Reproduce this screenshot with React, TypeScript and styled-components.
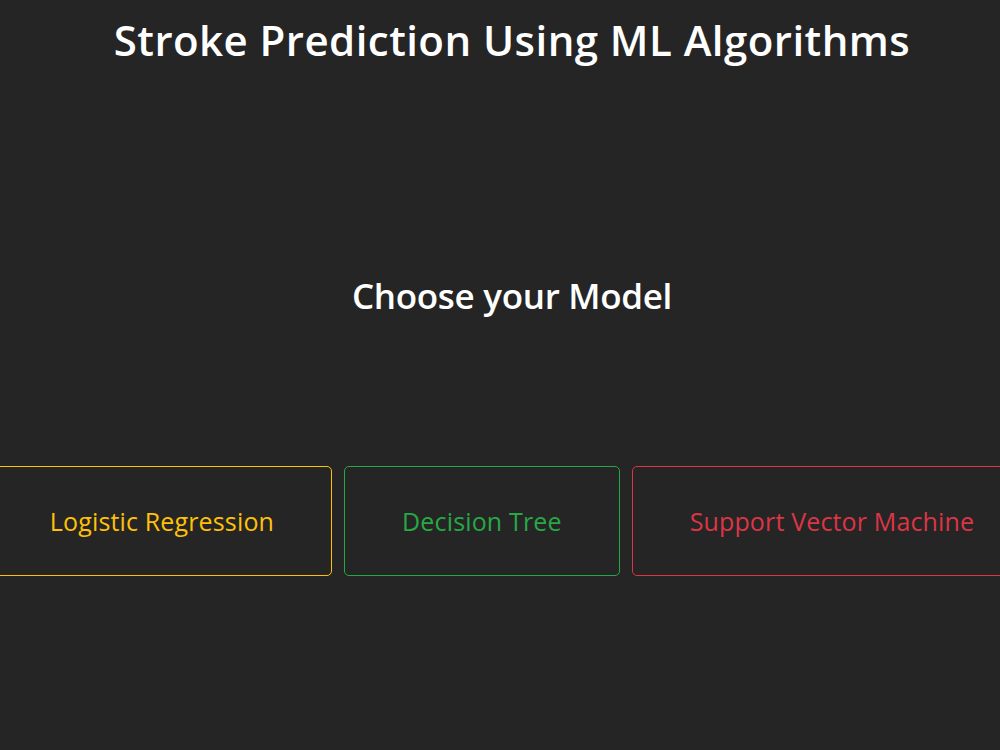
import styled, { createGlobalStyle } from "styled-components";

const GlobalStyle = createGlobalStyle`
  html, body {
    margin: 0;
    padding: 0;
    background-color: #252525;
    overflow: hidden;
  }
  body {
    font-family: "Open Sans", "Noto Sans", "DejaVu Sans", sans-serif;
    color: #ffffff;
  }
`;

const Page = styled.div`
  width: 1024px;
  height: 750px;
  display: flex;
  flex-direction: column;
  align-items: center;
`;

const Title = styled.h1`
  margin: 16px 0 0;
  font-size: 42px;
  line-height: 48px;
  font-weight: 600;
  letter-spacing: 0.45px;
  text-align: center;
`;

const Subtitle = styled.h2`
  margin: 211px 0 0;
  font-size: 35px;
  line-height: 42px;
  font-weight: 600;
  letter-spacing: -0.3px;
  text-align: center;
`;

const ModelRow = styled.div`
  margin-top: 149px;
  width: 100%;
  display: flex;
  justify-content: center;
  gap: 12px;
`;

const ModelButton = styled.button<{ $tone: string }>`
  flex-shrink: 0;
  height: 110px;
  padding: 0 57px;
  background: transparent;
  border: 1px solid ${(p) => p.$tone};
  border-radius: 5px;
  color: ${(p) => p.$tone};
  font-family: inherit;
  font-size: 25px;
  font-weight: 400;
  letter-spacing: 0.15px;
  cursor: pointer;
  white-space: nowrap;
`;

const models = [
  { name: "Logistic Regression", tone: "#ffc107" },
  { name: "Decision Tree", tone: "#28a745" },
  { name: "Support Vector Machine", tone: "#dc3545" },
];

export default function App() {
  return (
    <>
      <GlobalStyle />
      <Page>
        <Title>Stroke Prediction Using ML Algorithms</Title>
        <Subtitle>Choose your Model</Subtitle>
        <ModelRow>
          {models.map((m) => (
            <ModelButton key={m.name} $tone={m.tone}>
              {m.name}
            </ModelButton>
          ))}
        </ModelRow>
      </Page>
    </>
  );
}
